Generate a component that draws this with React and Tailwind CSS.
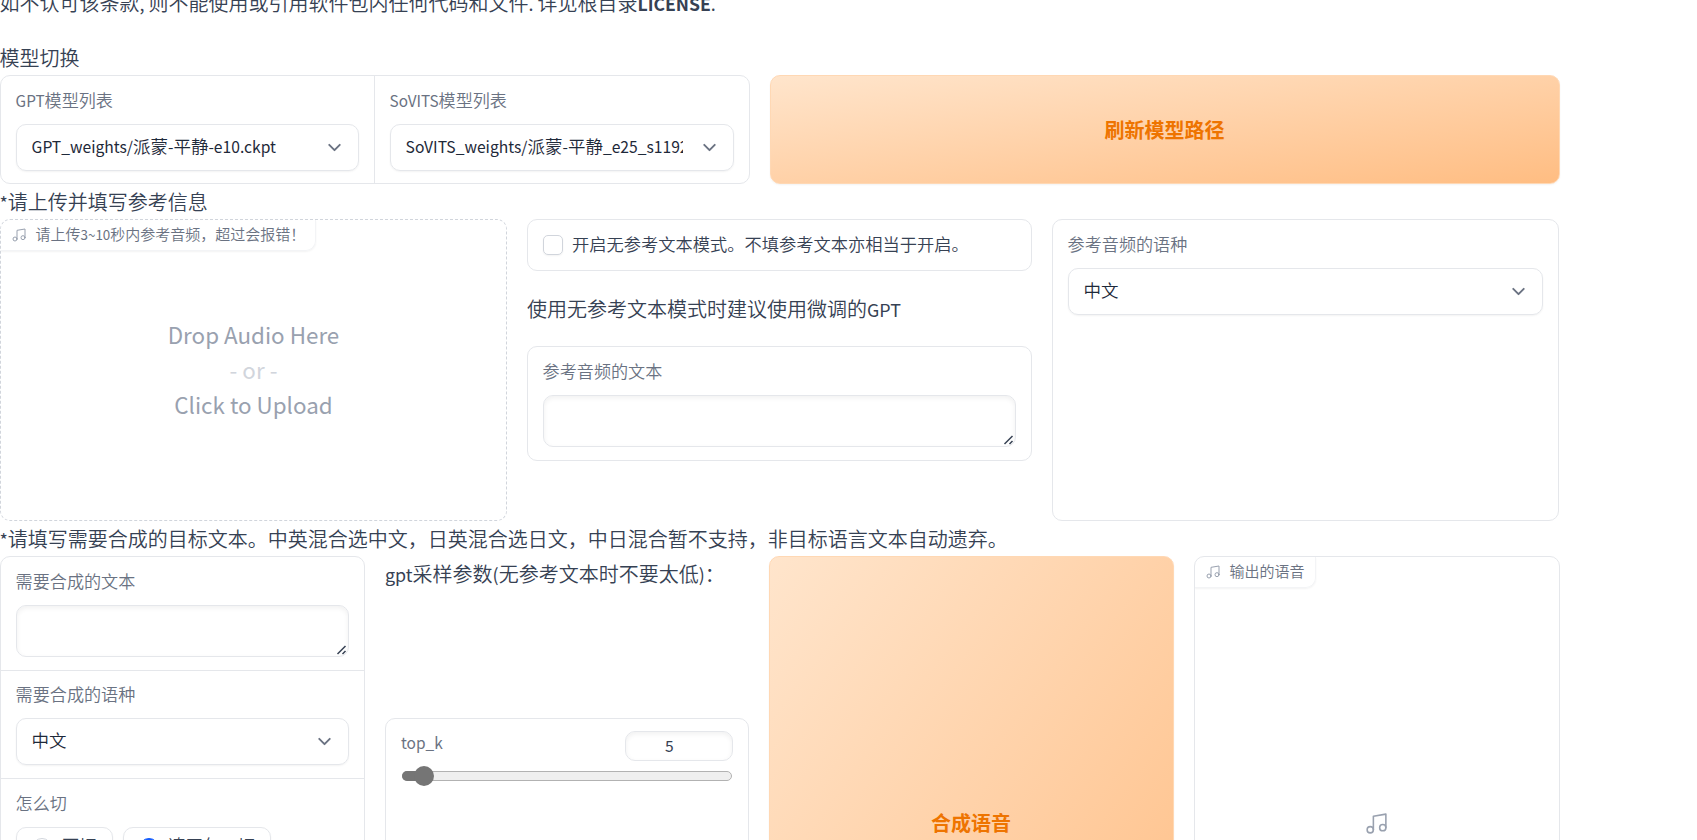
import { useState } from 'react'
import { ChevronDown } from 'lucide-react'

// latin runs are set a little smaller than the hanzi next to them
function Mixed({ children }) {
  return children.split(/([\x20-\x7e]+)/).filter(Boolean).map((part, i) => (
    /^[\x20-\x7e]/.test(part)
      ? <span key={i} className="text-[0.895em]">{part}</span>
      : <span key={i} className="font-[350]">{part}</span>
  ))
}

function Label({ children }) {
  return <div className="h-[22px] mb-3 -ml-[0.4px] text-[17.1px] leading-5 text-gray-500 whitespace-pre"><Mixed>{children}</Mixed></div>
}

function Select({ value }) {
  return (
    <div className="h-[47px] pl-[14.6px] pr-[13px] flex items-center gap-4 rounded-[10px] border border-gray-200 shadow-xs text-[17.5px] text-gray-800">
      <div className="flex-1 overflow-hidden whitespace-pre leading-[26px] -mt-[3px]"><Mixed>{value}</Mixed></div>
      <ChevronDown size={21} strokeWidth={2.2} className="text-gray-500 shrink-0" />
    </div>
  )
}

function TextArea() {
  return (
    <div className="h-[52px] flex items-end justify-end rounded-[10px] border border-gray-200 shadow-[inset_0_2px_5px_rgba(0,0,0,0.06)]">
      <svg width="12" height="12" viewBox="0 0 12 12" className="text-gray-700" stroke="currentColor" strokeWidth="1.5">
        <path d="M1.5 10L9.5 2M6.5 10L9.5 7" />
      </svg>
    </div>
  )
}

function MusicIcon({ size }) {
  return (
    <svg width={size} height={size} viewBox="0 0 24 24" fill="none" stroke="currentColor" strokeWidth="1.5" strokeLinecap="round" strokeLinejoin="round" className="text-gray-400 shrink-0">
      <path d="M9 18V5l12-2v13" />
      <circle cx="6" cy="18" r="3" />
      <circle cx="18" cy="16" r="3" />
    </svg>
  )
}

function AudioTag({ children }) {
  return (
    <div className="self-start h-[31px] pl-[9.5px] pr-2.5 flex items-center gap-[9px] rounded-br-[10px] border-r border-b border-gray-100 shadow-xs text-[15px] text-gray-500 whitespace-pre">
      <MusicIcon size={16} />
      <span className="leading-5 -mt-0.5"><Mixed>{children}</Mixed></span>
    </div>
  )
}

function PrimaryButton({ children, className }) {
  return (
    <button className={`pr-px rounded-[10px] border border-[#ffd8b4] bg-linear-to-br from-[#ffe5cc] to-[#ffbd82] shadow-xs text-xl font-bold text-[#ee7400] ${className}`}>
      {children}
    </button>
  )
}

function Radio({ label, checked, onChange }) {
  return (
    <button onClick={onChange} className="h-[41px] px-[15px] flex items-center gap-2.5 rounded-[10px] border border-gray-200 shadow-xs text-[17.3px] text-gray-700">
      <span className={`w-5 h-5 rounded-full border ${checked ? 'bg-blue-600 border-blue-600' : 'border-gray-300'}`} />
      <span className="leading-5 -mt-1.5"><Mixed>{label}</Mixed></span>
    </button>
  )
}

function App() {
  const [noRefText, setNoRefText] = useState(false)
  const [cut, setCut] = useState('凑四句一切')
  const topK = 5

  return (
    <div className="h-[840px] overflow-hidden bg-white text-xl text-gray-700 font-['Noto_Sans_CJK_SC',sans-serif]">
      <div className="w-[1560px]">
        <p className="h-[43px] leading-[29px] -mt-3 -ml-[0.5px] whitespace-pre">
          <Mixed>如不认可该条款, 则不能使用或引用软件包内任何代码和文件. 详见根目录</Mixed>
          <b className="text-[0.88em]">LICENSE</b>
          <Mixed>.</Mixed>
        </p>
        <p className="h-8 mt-3 -ml-[0.5px] leading-[29px]"><Mixed>模型切换</Mixed></p>

        <div className="flex gap-5 h-[109px]">
          <div className="w-[750px] flex rounded-[10px] border border-gray-200">
            <div className="w-[374px] px-[15px] pt-[14px] border-r border-gray-200">
              <Label>GPT模型列表</Label>
              <Select value="GPT_weights/派蒙-平静-e10.ckpt" />
            </div>
            <div className="w-[374px] px-[15px] pt-[14px]">
              <Label>SoVITS模型列表</Label>
              <Select value="SoVITS_weights/派蒙-平静_e25_s11920.pth" />
            </div>
          </div>
          <PrimaryButton className="flex-1">刷新模型路径</PrimaryButton>
        </div>

        <p className="h-[35px] leading-[35px] -ml-[0.5px]"><Mixed>*请上传并填写参考信息</Mixed></p>

        <div className="flex gap-5 h-[302px] w-[1559px]">
          <div className="w-[507px] flex flex-col rounded-[10px] border border-dashed border-gray-300 overflow-hidden">
            <AudioTag>请上传3~10秒内参考音频，超过会报错！</AudioTag>
            <div className="pt-[66px] text-center text-[22.4px] leading-[35px] text-gray-400">
              <div>Drop Audio Here</div>
              <div className="text-gray-300">- or -</div>
              <div>Click to Upload</div>
            </div>
          </div>
          <div className="w-[505px]">
            <label className="h-[52px] px-[15px] flex items-center gap-[9px] rounded-[10px] border border-gray-200 text-[17.25px] text-gray-700">
              <input
                type="checkbox"
                checked={noRefText}
                onChange={(e) => setNoRefText(e.target.checked)}
                className="appearance-none w-5 h-5 rounded-[5px] border border-gray-300 shadow-xs checked:bg-blue-600"
              />
              <span className="-mt-0.5"><Mixed>开启无参考文本模式。不填参考文本亦相当于开启。</Mixed></span>
            </label>
            <p className="h-[75px] leading-[75px]"><Mixed>使用无参考文本模式时建议使用微调的GPT</Mixed></p>
            <div className="h-[115px] px-[15px] pt-[14px] rounded-[10px] border border-gray-200">
              <Label>参考音频的文本</Label>
              <TextArea />
            </div>
          </div>
          <div className="w-[507px] px-[15px] pt-[14px] rounded-[10px] border border-gray-200">
            <Label>参考音频的语种</Label>
            <Select value="中文" />
          </div>
        </div>

        <p className="h-[35px] leading-[35px] -ml-[0.5px]"><Mixed>*请填写需要合成的目标文本。中英混合选中文，日英混合选日文，中日混合暂不支持，非目标语言文本自动遗弃。</Mixed></p>

        <div className="flex gap-5 h-[534px]">
          <div className="w-[365px] rounded-[10px] border border-gray-200">
            <div className="h-[114px] px-[15px] pt-[14px] border-b border-gray-200">
              <Label>需要合成的文本</Label>
              <TextArea />
            </div>
            <div className="h-[108px] px-[15px] pt-[13px] border-b border-gray-200">
              <Label>需要合成的语种</Label>
              <Select value="中文" />
            </div>
            <div className="px-[15px] pt-[14px]">
              <Label>怎么切</Label>
              <div className="flex gap-2.5">
                {['不切', '凑四句一切'].map((item) => (
                  <Radio key={item} label={item} checked={cut === item} onChange={() => setCut(item)} />
                ))}
              </div>
            </div>
          </div>

          <div className="w-[364px]">
            <p className="h-[162px] leading-[35px]"><Mixed>gpt采样参数(无参考文本时不要太低)：</Mixed></p>
            <div className="h-[372px] px-[15px] pt-3 rounded-[10px] border border-gray-200">
              <div className="flex justify-between">
                <div className="text-[17.3px] leading-[22px] text-gray-500"><Mixed>top_k</Mixed></div>
                <div className="w-[108px] h-[30px] pl-[39px] rounded-[10px] border border-gray-200 shadow-[inset_0_2px_5px_rgba(0,0,0,0.06)] text-[15.6px] leading-[27px]">{topK}</div>
              </div>
              <div className="mt-2.5 mx-px h-2.5 flex items-center rounded-full border border-[#b2b2b2] bg-[#efefef]">
                <div className="-ml-px -mr-1 h-2.5 w-4 rounded-l-full bg-[#757575]" />
                <div className="w-5 h-5 shrink-0 rounded-full bg-[#757575]" />
              </div>
            </div>
          </div>

          <PrimaryButton className="w-[405px]">合成语音</PrimaryButton>

          <div className="flex-1 flex flex-col rounded-[10px] border border-gray-200 overflow-hidden">
            <AudioTag>输出的语音</AudioTag>
            <div className="h-[470px] pr-0.5 flex items-center justify-center">
              <MusicIcon size={25} />
            </div>
          </div>
        </div>
      </div>
    </div>
  )
}

export default App
